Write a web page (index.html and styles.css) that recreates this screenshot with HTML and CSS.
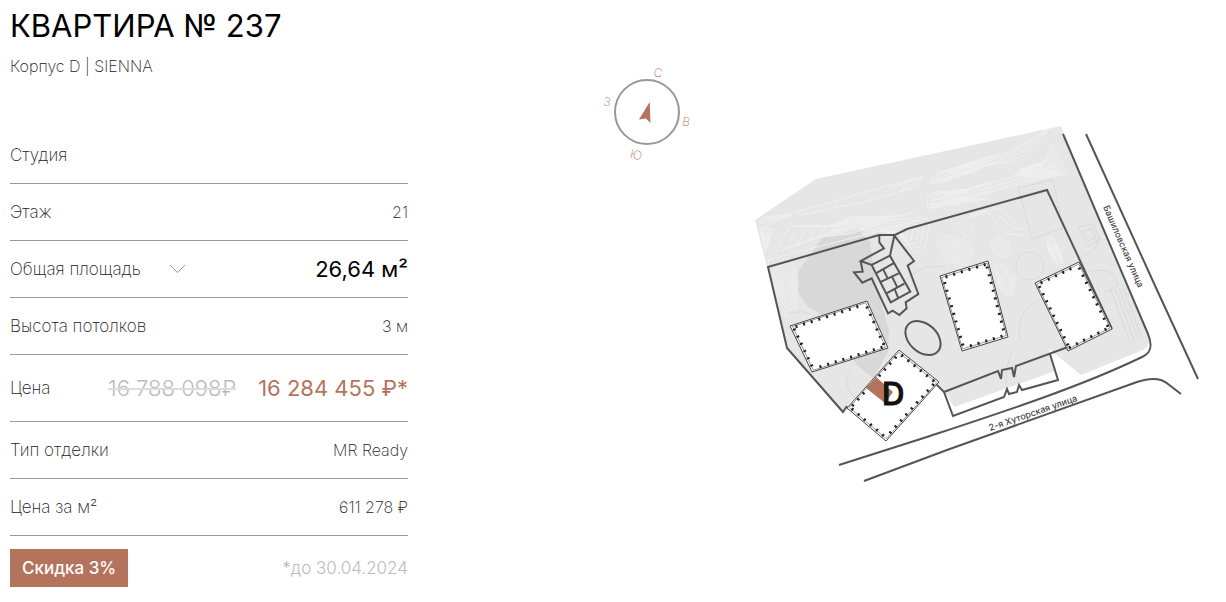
FILE: index.html
```html
<!DOCTYPE html>
<html lang="ru">
<head>
    <meta charset="UTF-8">
    <meta name="viewport" content="width=device-width, initial-scale=1.0">
    <title>Квартира № 237</title>
    <link rel="stylesheet" href="styles.css">
</head>
<body>

    <main class="flat">
        <section class="info">
            <h1>КВАРТИРА № 237</h1>
            <p class="building">Корпус D | SIENNA</p>

            <dl class="params">
                <div class="row">
                    <dt>Студия</dt>
                </div>
                <div class="row">
                    <dt>Этаж</dt>
                    <dd>21</dd>
                </div>
                <div class="row">
                    <dt>
                        <button class="toggle" type="button">
                            Общая площадь
                            <svg width="17" height="10" viewBox="0 0 17 10"><path d="M1 1l7.500 7.500L16 1"/></svg>
                        </button>
                    </dt>
                    <dd class="area">26,64 м²</dd>
                </div>
                <div class="row">
                    <dt>Высота потолков</dt>
                    <dd>3 м</dd>
                </div>
                <div class="row row-price">
                    <dt>Цена</dt>
                    <dd class="prices"><s>16 788 098₽</s><span class="price">16 284 455 ₽*</span></dd>
                </div>
                <div class="row">
                    <dt>Тип отделки</dt>
                    <dd>MR Ready</dd>
                </div>
                <div class="row">
                    <dt>Цена за м²</dt>
                    <dd>611 278 ₽</dd>
                </div>
            </dl>

            <div class="discount">
                <span class="badge">Скидка 3%</span>
                <span class="until">*до 30.04.2024</span>
            </div>
        </section>

        <section class="plan">
            <svg class="compass" viewBox="595 60 110 110">
                <circle cx="647" cy="112" r="32"/>
                <path d="M649.700 102L650.500 123L646 118.500L639 119.500Z"/>
                <text transform="translate(658 73) rotate(12)" dy="4">С</text>
                <text transform="translate(686 122) rotate(12)" dy="4">В</text>
                <text transform="translate(636 155) rotate(12)" dy="4">Ю</text>
                <text transform="translate(607 102) rotate(12)" dy="4">З</text>
            </svg>

            <svg class="map" viewBox="746 110 470 390">
                <!-- территория -->
                <path class="ground" d="M755 220L816 179L1061 126L1064 134L1148 334Q1152 344 1143 350L1081 375L1049 349L1055 371L954 407L945 392L938 384L900 350L847 406L843 411L787 348L767 267Z"/>
                <path class="shade" d="M822 238L858 227L863 235L870 242L876 285L889 330L888 352L873 378L857 365L830 320L807 306L797 290L798 272L812 252Z"/>

                <g id="contours" class="contours"></g>

                <g class="relief">
                    <path d="M758 221L792 214L760 229M758 224L790 216M762 218L793 213M796 212L923 176L918 186L870 201L800 215ZM812 215l8-8M828 211l10-8M846 207l10-8M864 203l10-8M882 196l10-9M900 190l10-9M892 187L921 178M900 192L922 178"/>
                    <path d="M767 260L860 236L928 218M770 256L768 264M928 209L1017 185L1062 174M929 205L985 192L1060 171M930 201L980 190L1058 169M935 199L988 184L1056 166"/>
                    <path d="M930 182L960 170L1001 157L1048 129L1040 139L1024 155L1008 162L978 166L935 183ZM960 173L1001 160L1044 133M970 171L1010 159L1040 138"/>
                    <path d="M965 218L988 212L998 224L1006 234L1024 235M970 215L994 209L1004 221L1013 228L1025 229M980 212L1001 208L1016 223M956 222L966 238L974 225"/>
                </g>

                <g class="paths">
                    <path d="M1018 188L1053 180L1063 228L1032 239Z"/>
                    <circle cx="1030" cy="266" r="14"/>
                    <path d="M1079 227L1093 224L1100 240L1087 246ZM1083 231L1092 229L1096 238L1088 241Z"/>
                    <path d="M1099 235Q1100 250 1080 258M1090 271Q1115 267 1118 285M1006 385Q1005 370 1012 350M1020 340Q1015 310 1040 300M905 280Q925 262 945 267M850 372Q840 382 855 398M788 314Q805 308 816 318"/>
                    <path d="M1111 290L1131 345M1115 289L1135 343M1119 288L1139 341M1123 287L1142 338M1104 292L1118 286"/>
                </g>

                <!-- границы квартала -->
                <path class="line" d="M936 384L944 392L953 416L1004 397L1007 389L1009 394L1017 392L1019 385L1022 390L1058 380L1050 354"/>
                <path class="line" d="M944 392L998 371L1001 379L1002 370L1012 368L1014 377L1016 366L1068 347"/>
                <path class="line" d="M847 406L843 412L787 348L768 267L879 235H895L907 229L1047 190L1112 329"/>
                <ellipse class="line" cx="923" cy="338" rx="20" ry="14" transform="rotate(42 923 338)"/>

                <g class="pavilion" transform="translate(840 225) scale(.3333)">
                    <path d="M118 30V52L132 70L62 108L95 120L150 92L163 32L222 108L203 122L235 207L197 232L200 250L178 270L158 257L144 265L95 160L67 173L42 142L68 140L62 108"/>
                    <path d="M95 120L152 232L211 200L150 92M106 146L160 115M119 172L176 145M138 206L193 176M130 134L143 160M156 155L172 187M164 192L174 218"/>
                </g>

                <!-- улицы -->
                <path class="line" d="M1063 134L1148 334C1153 346 1151 353 1142 357C1080 387 1000 413 930 436L839 465"/>
                <path class="line" d="M1086 134L1157 290L1198 379"/>
                <path class="line" d="M864 481L947 450L1137 382Q1158 375 1168 384L1181 394"/>
                <text class="street" transform="translate(1103 207) rotate(66.500)">Башиловская улица</text>
                <text class="street" transform="translate(990 431) rotate(-19)">2-я Хуторская улица</text>

                <!-- корпуса -->
                <g id="houses"></g>
                <path class="flat-mark" d="M876 377L893 392L885 403L866 388Z"/>
                <text class="letter" x="882" y="405">D</text>
            </svg>
        </section>
    </main>

    <script src="map.js"></script>
</body>
</html>
```
FILE: styles.css
```css
body {
    font-family: Inter, 'Open Sans', sans-serif;
    font-size: 16px;
    font-weight: 200;
    line-height: 20px;
    color: #222;
    background-color: #fff;
    margin: 0;
}

.flat {
    display: grid;
    grid-template-columns: 33% 1fr;
    padding: 6px 10px 14px;
}

h1 {
    font-size: 31px;
    font-weight: 400;
    line-height: 40px;
    color: #000;
    margin: 0;
    white-space: nowrap;
}

.building {
    margin: 10px 0 51px;
}

.params {
    margin: 0;
}

.row {
    display: flex;
    justify-content: space-between;
    align-items: center;
    height: 56px;
    border-bottom: 1px solid #999;
    white-space: nowrap;
}

.row-price {
    height: 66px;
}

.row dt {
    font-size: 17px;
}

.row dd {
    margin: 0;
}

.toggle {
    display: flex;
    align-items: center;
    gap: 28px;
    padding: 0;
    border: none;
    background: none;
    font: inherit;
    color: inherit;
    cursor: pointer;
}

.toggle svg {
    fill: none;
    stroke: #999;
}

.row .area {
    font-size: 22px;
    font-weight: 400;
    color: #000;
}

.prices {
    display: flex;
    gap: 22px;
    font-size: 22px;
    font-weight: 400;
}

.prices s {
    font-weight: 300;
    color: #bbb;
    text-decoration-color: #ddd;
    text-decoration-thickness: 2px;
}

.price {
    color: #b4735d;
}

.discount {
    display: flex;
    justify-content: space-between;
    align-items: center;
    padding-top: 13px;
    font-size: 17px;
}

.badge {
    padding: 9px 12px;
    background-color: #b4735d;
    color: #fff;
    font-weight: 500;
}

.until {
    color: #bbb;
    font-weight: 300;
}

.plan {
    display: flex;
    justify-content: space-between;
    align-items: flex-start;
    padding-left: 187px;
}

.compass {
    width: 110px;
    margin-top: 54px;
    flex: none;
}

.compass circle {
    fill: none;
    stroke: #999;
    stroke-width: 2;
}

.compass path,
.compass text {
    fill: #b4735d;
}

.compass text {
    font-size: 12px;
    text-anchor: middle;
}

.map {
    width: 470px;
    margin-top: 104px;
    min-width: 0;
}

.ground {
    fill: #e6e6e6;
}

.shade {
    fill: #d8d8d8;
}

.contours,
.relief {
    fill: none;
    stroke: #f0f0f0;
    stroke-width: 1;
}

.paths {
    fill: none;
    stroke: #dadada;
}

.line {
    fill: none;
    stroke: #555;
    stroke-width: 2;
}

.pavilion {
    fill: none;
    stroke: #555;
    stroke-width: 6;
}

.house {
    fill: #fff;
    stroke: #444;
}

.house-inner {
    fill: none;
    stroke: #999;
}

.teeth {
    fill: none;
    stroke: #222;
    stroke-width: 2;
}

.street {
    font-size: 9px;
    font-weight: 500;
    fill: #444;
}

.flat-mark {
    fill: #b4735d;
}

.letter {
    font-size: 31px;
    font-weight: 500;
    fill: #111;
    stroke: #111;
}
```
FILE: map.js
```js
var NS = 'http://www.w3.org/2000/svg';

function addPath(parent, d, cls) {
    var path = document.createElementNS(NS, 'path');
    path.setAttribute('d', d);
    if (cls) path.setAttribute('class', cls);
    parent.appendChild(path);
}

function toPath(points) {
    return 'M' + points.map(function (p) {
        return p[0].toFixed(1) + ' ' + p[1].toFixed(1);
    }).join('L') + 'Z';
}

// уменьшаем контур к его центру
function shrink(points, k) {
    var cx = 0, cy = 0;
    points.forEach(function (p) {
        cx += p[0] / points.length;
        cy += p[1] / points.length;
    });
    return points.map(function (p) {
        return [cx + (p[0] - cx) * k, cy + (p[1] - cy) * k];
    });
}

// холмы: точки внешнего контура и число линий
var hills = [
    { rings: 6, points: [[775, 253], [790, 226], [815, 225], [832, 226], [850, 217], [895, 216], [914, 212], [885, 222], [850, 234], [820, 237]] },
    { rings: 5, points: [[860, 230], [890, 221], [921, 217], [930, 222], [924, 251], [914, 252], [900, 235], [880, 231]] },
    { rings: 6, points: [[930, 182], [938, 173], [965, 164], [1000, 154], [978, 170], [940, 183]] },
    { rings: 7, points: [[927, 197], [936, 192], [968, 189], [992, 181], [985, 199], [940, 207], [928, 208]] },
    { rings: 8, points: [[1053, 144], [1067, 174], [1044, 178], [1014, 175], [1030, 166], [1045, 161]] },
    { rings: 5, points: [[1018, 175], [1021, 168], [1036, 166], [1032, 176]] },
    { rings: 6, points: [[937, 244], [947, 235], [966, 240], [974, 254], [967, 265], [946, 262]] },
    { rings: 4, points: [[990, 244], [998, 235], [1008, 241], [1013, 252], [1004, 258], [993, 252]] },
    { rings: 5, points: [[994, 265], [1000, 263], [1015, 276], [1013, 293], [1007, 296], [999, 287]] },
    { rings: 6, points: [[1046, 238], [1053, 237], [1060, 252], [1063, 263], [1055, 262], [1049, 252]] },
    { rings: 6, points: [[773, 273], [784, 258], [794, 264], [798, 285], [796, 311], [787, 316], [778, 300]] },
    { rings: 5, points: [[760, 228], [772, 229], [768, 246], [765, 252]] }
];

// углы корпусов по часовой стрелке
var houses = [
    [[790, 326], [867, 301], [888, 348], [812, 372]],
    [[940, 276], [988, 261], [1008, 337], [962, 351]],
    [[1035, 283], [1079, 262], [1112, 329], [1068, 351]],
    [[899, 350], [939, 382], [886, 441], [847, 408]]
];

var contours = document.getElementById('contours');
hills.forEach(function (hill) {
    for (var i = 0; i < hill.rings; i++) {
        addPath(contours, toPath(shrink(hill.points, 1 - i / hill.rings)));
    }
});

// зубцы балконов вдоль каждой стены, внутрь корпуса
function teeth(points) {
    var d = '';
    points.forEach(function (a, i) {
        var b = points[(i + 1) % points.length];
        var dx = b[0] - a[0], dy = b[1] - a[1];
        var len = Math.sqrt(dx * dx + dy * dy);
        dx /= len;
        dy /= len;
        for (var s = 6; s < len - 3; s += 8) {
            var x = a[0] + dx * s - dy;
            var y = a[1] + dy * s + dx;
            d += 'M' + x.toFixed(1) + ' ' + y.toFixed(1) + 'l' + (-dy * 3).toFixed(1) + ' ' + (dx * 3).toFixed(1);
        }
    });
    return d;
}

var group = document.getElementById('houses');
houses.forEach(function (points) {
    addPath(group, toPath(points), 'house');
    addPath(group, toPath(shrink(points, 0.95)), 'house-inner');
    addPath(group, teeth(points), 'teeth');
});
```
